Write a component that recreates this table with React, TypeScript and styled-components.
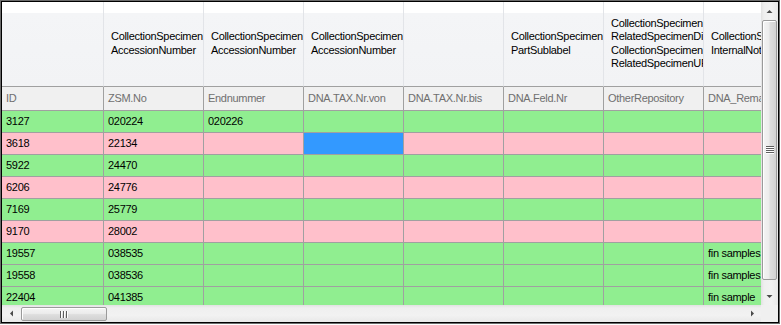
import React from 'react';
import styled, { createGlobalStyle } from 'styled-components';

const Global = createGlobalStyle`
  html, body { margin: 0; padding: 0; background: #ffffff; }
  body { font-family: "Liberation Sans", Arial, sans-serif; font-size: 11px; letter-spacing: -0.3px; }
`;

type Col = { w: number; head: string[]; label: string };

const columns: Col[] = [
  { w: 102, head: [], label: 'ID' },
  { w: 100, head: ['CollectionSpecimen', 'AccessionNumber'], label: 'ZSM.No' },
  { w: 100, head: ['CollectionSpecimen', 'AccessionNumber'], label: 'Endnummer' },
  { w: 100, head: ['CollectionSpecimen', 'AccessionNumber'], label: 'DNA.TAX.Nr.von' },
  { w: 100, head: [], label: 'DNA.TAX.Nr.bis' },
  { w: 100, head: ['CollectionSpecimen', 'PartSublabel'], label: 'DNA.Feld.Nr' },
  {
    w: 100,
    head: ['CollectionSpecimen', 'RelatedSpecimenDisplayText', 'CollectionSpecimen', 'RelatedSpecimenURI'],
    label: 'OtherRepository',
  },
  { w: 100, head: ['CollectionSpecimen', 'InternalNotes'], label: 'DNA_Remarks' },
];

type Tone = 'green' | 'pink';
const rows: { tone: Tone; cells: string[] }[] = [
  { tone: 'green', cells: ['3127', '020224', '020226', '', '', '', '', ''] },
  { tone: 'pink', cells: ['3618', '22134', '', '', '', '', '', ''] },
  { tone: 'green', cells: ['5922', '24470', '', '', '', '', '', ''] },
  { tone: 'pink', cells: ['6206', '24776', '', '', '', '', '', ''] },
  { tone: 'green', cells: ['7169', '25779', '', '', '', '', '', ''] },
  { tone: 'pink', cells: ['9170', '28002', '', '', '', '', '', ''] },
  { tone: 'green', cells: ['19557', '038535', '', '', '', '', '', 'fin samples'] },
  { tone: 'green', cells: ['19558', '038536', '', '', '', '', '', 'fin samples'] },
  { tone: 'green', cells: ['22404', '041385', '', '', '', '', '', 'fin sample'] },
];

const selected = { row: 1, col: 3 };

const Frame = styled.div`
  width: 780px;
  height: 324px;
  box-sizing: border-box;
  border: 1px solid #6b6b6b;
  display: flex;
`;

const Inner = styled.div`
  flex: 1;
  border: 1px solid #000000;
  display: flex;
  flex-direction: column;
  overflow: hidden;
  background: #ffffff;
`;

const Top = styled.div`
  flex: 1;
  display: flex;
  min-height: 0;
`;

const Viewport = styled.div`
  flex: 1;
  overflow: hidden;
  min-width: 0;
`;

const Row = styled.div`
  display: flex;
  width: max-content;
`;

const BandCell = styled.div<{ $w: number }>`
  width: ${(p) => p.$w}px;
  flex-shrink: 0;
  box-sizing: border-box;
  height: 85px;
  border-right: 1px solid #e2e4e8;
  border-bottom: 1px solid #a0a0a0;
  background: linear-gradient(#ffffff 0, #ffffff 11px, #f4f5f7 11px, #f2f3f5 100%);
  display: flex;
  flex-direction: column;
  justify-content: center;
  padding: 0 0 1px 7px;
  overflow: hidden;
  color: #000000;
  line-height: 13.3px;
`;

const HeadLine = styled.div`
  white-space: pre;
`;

const LabelCell = styled.div<{ $w: number }>`
  width: ${(p) => p.$w}px;
  flex-shrink: 0;
  box-sizing: border-box;
  height: 24px;
  border-right: 1px solid #a0a0a0;
  border-bottom: 1px solid #a0a0a0;
  background: #f0f0f0;
  color: #6f6f6f;
  display: flex;
  align-items: center;
  padding: 0 0 1px 4px;
  white-space: pre;
  overflow: hidden;
`;

const DataCell = styled.div<{ $w: number; $tone: Tone; $sel?: boolean }>`
  width: ${(p) => p.$w}px;
  flex-shrink: 0;
  box-sizing: border-box;
  height: 22px;
  border-right: 1px solid #a0a0a0;
  border-bottom: 1px solid #a0a0a0;
  background: ${(p) => (p.$sel ? '#3399ff' : p.$tone === 'green' ? '#90ee90' : '#ffc0cb')};
  color: #000000;
  display: flex;
  align-items: center;
  padding: 0 0 2px 4px;
  white-space: pre;
  overflow: hidden;
`;

const VScroll = styled.div`
  width: 17px;
  flex-shrink: 0;
  display: flex;
  flex-direction: column;
  background: linear-gradient(90deg, #e2e2e2 0, #efefef 3px, #f2f2f2 60%, #e8e8e8 100%);
`;

const HScroll = styled.div`
  flex: 1;
  display: flex;
  align-items: stretch;
  background: linear-gradient(#e2e2e2 0, #efefef 3px, #f2f2f2 60%, #e8e8e8 100%);
`;

const Bottom = styled.div`
  height: 17px;
  flex-shrink: 0;
  display: flex;
`;

const Corner = styled.div`
  width: 17px;
  flex-shrink: 0;
  background: #f0f0f0;
`;

const ArrowBox = styled.div`
  width: 17px;
  height: 17px;
  flex-shrink: 0;
  display: flex;
  align-items: center;
  justify-content: center;
`;

const VTrack = styled.div`
  flex: 1;
  display: flex;
  flex-direction: column;
  padding: 1px 0 0 1px;
`;

const HTrack = styled.div`
  flex: 1;
  display: flex;
  padding: 2px 0 1px 2px;
`;

const VThumb = styled.div`
  height: 260px;
  width: 15px;
  box-sizing: border-box;
  border: 1px solid #9a9a9a;
  border-radius: 2px;
  background: linear-gradient(90deg, #f4f4f4 0, #ececec 45%, #dedede 55%, #d2d2d2 100%);
  box-shadow: inset 1px 1px 0 #ffffff;
  display: flex;
  align-items: center;
  justify-content: center;
`;

const HThumb = styled.div`
  width: 86px;
  height: 14px;
  box-sizing: border-box;
  border: 1px solid #9a9a9a;
  border-radius: 2px;
  background: linear-gradient(#f4f4f4 0, #ececec 45%, #dedede 55%, #d2d2d2 100%);
  box-shadow: inset 1px 1px 0 #ffffff;
  display: flex;
  align-items: center;
  justify-content: center;
`;

const Arrow = ({ dir }: { dir: 'up' | 'down' | 'left' | 'right' }) => {
  const pts: Record<string, string> = {
    up: '0.5,4 3.5,1 6.5,4',
    down: '0.5,0 3.5,3 6.5,0',
    left: '4,0.5 1,3.5 4,6.5',
    right: '0,0.5 3,3.5 0,6.5',
  };
  const horiz = dir === 'left' || dir === 'right';
  return (
    <svg width={horiz ? 4 : 7} height={horiz ? 7 : 4} viewBox={horiz ? '0 0 4 7' : '0 0 7 4'}>
      <polygon points={pts[dir]} fill="#4a4a4a" />
    </svg>
  );
};

const VGrip = () => (
  <svg width="8" height="8" viewBox="0 0 8 8">
    {[0, 2, 4, 6].map((y) => (
      <g key={y}>
        <rect x="0" y={y} width="8" height="1" fill="#5e5e5e" />
        <rect x="0" y={y + 1} width="8" height="1" fill="#ffffff" />
      </g>
    ))}
  </svg>
);

const HGrip = () => (
  <svg width="8" height="7" viewBox="0 0 8 7">
    {[0, 3, 6].map((x) => (
      <g key={x}>
        <rect x={x} y="0" width="1" height="7" fill="#5e5e5e" />
        <rect x={x + 1} y="0" width="1" height="7" fill="#ffffff" />
      </g>
    ))}
  </svg>
);

export default function App() {
  return (
    <>
      <Global />
      <Frame>
        <Inner>
          <Top>
            <Viewport>
              <Row>
                {columns.map((c, i) => (
                  <BandCell key={i} $w={c.w}>
                    {c.head.map((h, j) => (
                      <HeadLine key={j}>{h}</HeadLine>
                    ))}
                  </BandCell>
                ))}
              </Row>
              <Row>
                {columns.map((c, i) => (
                  <LabelCell key={i} $w={c.w}>
                    {c.label}
                  </LabelCell>
                ))}
              </Row>
              {rows.map((r, ri) => (
                <Row key={ri}>
                  {columns.map((c, ci) => (
                    <DataCell
                      key={ci}
                      $w={c.w}
                      $tone={r.tone}
                      $sel={ri === selected.row && ci === selected.col}
                    >
                      {r.cells[ci]}
                    </DataCell>
                  ))}
                </Row>
              ))}
            </Viewport>
            <VScroll>
              <ArrowBox>
                <Arrow dir="up" />
              </ArrowBox>
              <VTrack>
                <VThumb>
                  <VGrip />
                </VThumb>
              </VTrack>
              <ArrowBox>
                <Arrow dir="down" />
              </ArrowBox>
            </VScroll>
          </Top>
          <Bottom>
            <HScroll>
              <ArrowBox>
                <Arrow dir="left" />
              </ArrowBox>
              <HTrack>
                <HThumb>
                  <HGrip />
                </HThumb>
              </HTrack>
              <ArrowBox>
                <Arrow dir="right" />
              </ArrowBox>
            </HScroll>
            <Corner />
          </Bottom>
        </Inner>
      </Frame>
    </>
  );
}
